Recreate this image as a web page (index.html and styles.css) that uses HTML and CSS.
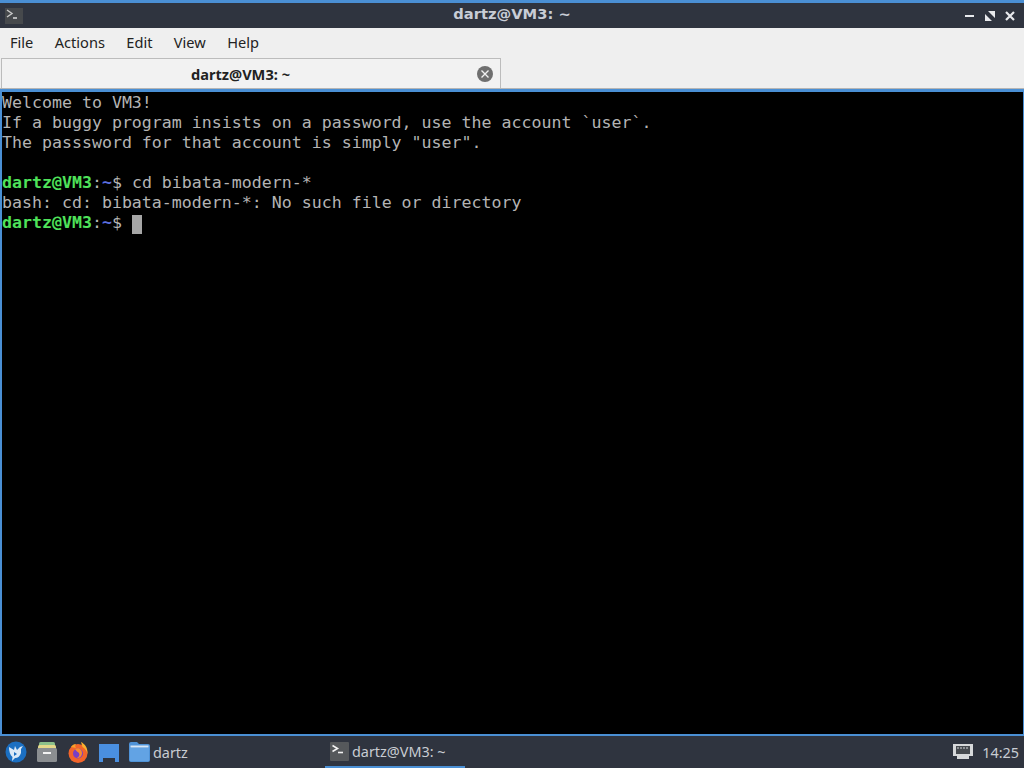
FILE: index.html
```html
<!DOCTYPE html>
<html lang="en">
<head>
<meta charset="utf-8">
<title>dartz@VM3: ~</title>
<link rel="stylesheet" href="styles.css">
</head>
<body>
<div class="window">
  <header class="titlebar">
    <span class="app-icon"><svg width="18" height="16" viewBox="0 0 18 16"><rect width="18" height="16" fill="#46494c"/><path d="M2 2l5 3.500-5 3.500" fill="none" stroke="#c9c9c9" stroke-width="1.400"/><path d="M8 10h4" stroke="#e6e6e6" stroke-width="1.400"/></svg></span>
    <span class="title">dartz@VM3: ~</span>
    <span class="controls">
      <svg width="12" height="12" viewBox="0 0 12 12"><path d="M1 6h9" stroke="#e8eaed" stroke-width="2"/></svg>
      <svg width="12" height="12" viewBox="0 0 12 12"><path d="M4 1h7v7zM1 4v7h7z" fill="#e8eaed"/></svg>
      <svg width="12" height="12" viewBox="0 0 12 12"><path d="M2 2l8 8M10 2l-8 8" stroke="#e8eaed" stroke-width="2.200"/></svg>
    </span>
  </header>
  <nav class="menubar">
    <span>File</span><span>Actions</span><span>Edit</span><span>View</span><span>Help</span>
  </nav>
  <div class="tabbar">
    <div class="tab">
      <span class="tab-label">dartz@VM3: ~</span>
      <span class="tab-close"><svg width="16" height="16" viewBox="0 0 16 16"><circle cx="8" cy="8" r="8" fill="#6f6f6f"/><path d="M4.500 4.500l7 7M11.500 4.500l-7 7" stroke="#f0f0f0" stroke-width="1.400"/></svg></span>
    </div>
  </div>
  <main class="terminal">
    <div class="line">Welcome to VM3!</div>
    <div class="line">If a buggy program insists on a password, use the account `user`.</div>
    <div class="line">The passsword for that account is simply "user".</div>
    <div class="line">&nbsp;</div>
    <div class="line"><b class="user">dartz@VM3</b>:<b class="path">~</b>$ cd bibata-modern-*</div>
    <div class="line">bash: cd: bibata-modern-*: No such file or directory</div>
    <div class="line"><b class="user">dartz@VM3</b>:<b class="path">~</b>$ <span class="cursor">&nbsp;</span></div>
  </main>
</div>
<footer class="taskbar">
  <div class="launchers">
    <svg class="ic" width="24" height="24" viewBox="0 0 24 24"><circle cx="12" cy="12" r="10.500" fill="#1b6fc2"/><path d="M5 7l5 3 1-4 2 4 3-3 3-1-2 3v4c-1 3-3 5-6 5l-3 3 .5-4C6 15 5 11 5 7z" fill="#dbe9f7"/><path d="M10 12l3 2-3 2z" fill="#1b6fc2"/></svg>
    <svg class="ic" width="22" height="24" viewBox="0 0 22 24"><rect x="3" y="2" width="16" height="5" rx="1.500" fill="#8cc08a"/><rect x="2" y="5" width="18" height="5" rx="1.500" fill="#e5d98a"/><rect x="1" y="8" width="20" height="14" rx="1.500" fill="#8b8e91"/><rect x="7" y="12" width="8" height="2" fill="#f2f2f2"/></svg>
    <svg class="ic" width="24" height="24" viewBox="0 0 24 24"><circle cx="12" cy="13.500" r="9.500" fill="#f2642a"/><path d="M15 2c4 2 7 6 6.500 12-1-4-3-6-5-7z" fill="#fbb12f"/><path d="M5 7c1-2 3-3 5-3-1 1-1 3 0 4z" fill="#f9a02a"/><circle cx="12" cy="13.500" r="5" fill="#7a3fc4"/><path d="M9 9c3-2 7 0 7 4 0 3-2 5-5 5 2-1 3-3 2-5-1-1-3-2-4-4z" fill="#f98a2b"/></svg>
    <svg class="ic" width="22" height="24" viewBox="0 0 22 24"><path d="M1 4h20v18h-4v-4H5v4H1z" fill="#4a8fe0"/></svg>
  </div>
  <div class="files">
    <svg width="21" height="20" viewBox="0 0 21 20"><path d="M0 2q0-2 2-2h6l2 2h9q2 0 2 2v14q0 2-2 2H2q-2 0-2-2z" fill="#4f93d8"/><rect x="1.500" y="3.500" width="18" height="2" fill="#d6e6f6"/><rect x="1" y="6" width="19" height="13" fill="#62a3e4"/></svg>
    <span>dartz</span>
  </div>
  <div class="task">
    <svg width="19" height="19" viewBox="0 0 19 19"><rect width="19" height="19" rx="1" fill="#55585b"/><path d="M2.500 3.500l5 3-5 3" fill="none" stroke="#f2f2f2" stroke-width="1.600"/><path d="M8 10.500h5" stroke="#f2f2f2" stroke-width="1.600"/></svg>
    <span>dartz@VM3: ~</span>
  </div>
  <div class="tray">
    <svg width="20" height="16" viewBox="0 0 20 16"><path d="M0 0h20v12h-4v3H4v-3H0z" fill="#d6d8da"/><rect x="3" y="2" width="14" height="8" fill="#45494e"/><path d="M5 3v2M8 3v2M11 3v2M14 3v2" stroke="#d6d8da"/></svg>
    <span>14:25</span>
  </div>
</footer>
</body>
</html>
```
FILE: styles.css
```css
* { box-sizing: border-box; }
html, body { margin: 0; height: 100%; }
body {
  width: 1024px;
  height: 768px;
  overflow: hidden;
  display: flex;
  flex-direction: column;
  background: #000;
  font-family: "Noto Sans", "Open Sans", sans-serif;
}
.window { flex: 1; display: flex; flex-direction: column; min-height: 0; }
.titlebar {
  height: 28px;
  flex: none;
  border-top: 3px solid #4a8fd4;
  background: #2f343f;
  display: flex;
  align-items: center;
  position: relative;
  padding-left: 5px;
}
.app-icon { display: flex; }
.title {
  position: absolute;
  left: 0;
  right: 0;
  top: 2px;
  text-align: center;
  color: #c8cdd6;
  font: bold 14.7px/18px "DejaVu Sans", sans-serif;
}
.controls {
  margin-left: auto;
  display: flex;
  gap: 8px;
  padding-right: 8px;
  position: relative;
}
.menubar {
  height: 30px;
  flex: none;
  background: #efefef;
  color: #222;
  font-size: 14.6px;
  display: flex;
  align-items: center;
  gap: 21.4px;
  padding: 0 0 2px 10px;
}
.tabbar {
  height: 31px;
  flex: none;
  background: #efefef;
  display: flex;
  padding-left: 1px;
  border-bottom: 1px solid #b5b5b5;
}
.tab {
  width: 500px;
  height: 30px;
  background: #f2f2f2;
  border: 1px solid #bcbcbc;
  border-bottom: none;
  display: flex;
  align-items: center;
}
.tab-label {
  flex: 1;
  text-align: center;
  font-size: 14.6px;
  font-weight: 700;
  color: #222;
  padding-left: 2px;
}
.tab-close { display: flex; margin-right: 7px; }
.terminal {
  flex: 1;
  min-height: 0;
  background: #000;
  color: #b4b4b4;
  border-top: 3px solid #4a8fd4;
  border-left: 2px solid #4a8fd4;
  border-right: 1px solid #4a8fd4;
  border-bottom: 2px solid #4a8fd4;
  padding-top: 1px;
  font: 16.6px/20px "DejaVu Sans Mono", monospace;
}
.line { white-space: pre; height: 20px; }
.terminal b { font-weight: 700; }
.user { color: #4fe35a; }
.path { color: #5c6fe0; }
.cursor { background: #a6a6a6; display: inline-block; width: 10px; height: 19px; vertical-align: -2px; }
.taskbar {
  height: 32px;
  flex: none;
  background: #2f343f;
  color: #c8ccd2;
  font-size: 14.4px;
  display: flex;
  align-items: center;
  padding-left: 4px;
}
.launchers { display: flex; align-items: center; gap: 8px; }
.ic { display: block; }
.files { display: flex; align-items: center; gap: 3px; margin-left: 9px; width: 196px; }
.task {
  width: 140px;
  height: 32px;
  display: flex;
  align-items: center;
  gap: 3px;
  padding-left: 5px;
  border-bottom: 2px solid #4a8fd4;
}
.tray { margin-left: auto; display: flex; align-items: center; gap: 9px; padding-right: 5px; }
```
